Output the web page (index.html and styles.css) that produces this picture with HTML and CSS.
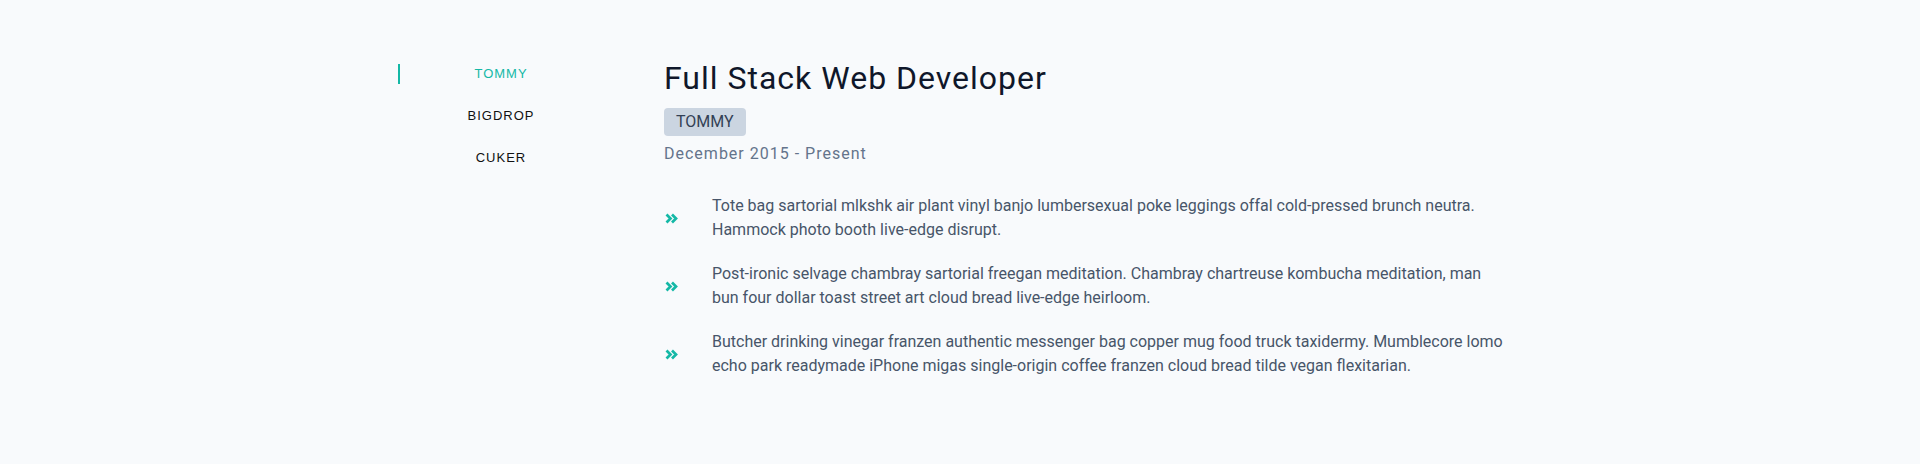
FILE: index.html
```html
<!DOCTYPE html>
<html lang="en">
<head>
<meta charset="utf-8">
<title>Experience</title>
<link rel="stylesheet" href="styles.css">
</head>
<body>
<div class="container">
  <nav class="tabs">
    <button class="tab tab-active">TOMMY</button>
    <button class="tab">BIGDROP</button>
    <button class="tab">CUKER</button>
  </nav>
  <section class="job">
    <h1 class="job-title">Full Stack Web Developer</h1>
    <span class="badge">TOMMY</span>
    <p class="dates">December 2015 - Present</p>
    <ul class="duties">
      <li class="duty">
        <span class="duty-icon"><svg width="13" height="11" viewBox="0 0 13 11"><path d="M1.5 1.5 L5.5 5.5 L1.5 9.5 M7 1.5 L11 5.5 L7 9.5" fill="none" stroke="#14b8a6" stroke-width="2.7" stroke-linecap="butt" stroke-linejoin="miter"/></svg></span>
        <p class="duty-text">Tote bag sartorial mlkshk air plant vinyl banjo lumbersexual poke leggings offal cold-pressed brunch neutra. Hammock photo booth live-edge disrupt.</p>
      </li>
      <li class="duty">
        <span class="duty-icon"><svg width="13" height="11" viewBox="0 0 13 11"><path d="M1.5 1.5 L5.5 5.5 L1.5 9.5 M7 1.5 L11 5.5 L7 9.5" fill="none" stroke="#14b8a6" stroke-width="2.7" stroke-linecap="butt" stroke-linejoin="miter"/></svg></span>
        <p class="duty-text">Post-ironic selvage chambray sartorial freegan meditation. Chambray chartreuse kombucha meditation, man bun four dollar toast street art cloud bread live-edge heirloom.</p>
      </li>
      <li class="duty">
        <span class="duty-icon"><svg width="13" height="11" viewBox="0 0 13 11"><path d="M1.5 1.5 L5.5 5.5 L1.5 9.5 M7 1.5 L11 5.5 L7 9.5" fill="none" stroke="#14b8a6" stroke-width="2.7" stroke-linecap="butt" stroke-linejoin="miter"/></svg></span>
        <p class="duty-text">Butcher drinking vinegar franzen authentic messenger bag copper mug food truck taxidermy. Mumblecore lomo echo park readymade iPhone migas single-origin coffee franzen cloud bread tilde vegan flexitarian.</p>
      </li>
    </ul>
  </section>
</div>
</body>
</html>
```

FILE: styles.css
```css
* { box-sizing: border-box; }

html, body {
  margin: 0;
  padding: 0;
  background: #f8fafc;
  min-height: 464px;
  font-family: Roboto, "Liberation Sans", Arial, sans-serif;
}

.container {
  width: 1124px;
  margin: 0 auto;
  padding-top: 60px;
  display: flex;
  align-items: flex-start;
}

.tabs {
  width: 204px;
  flex: none;
  margin-top: 4px;
  display: flex;
  flex-direction: column;
  gap: 22px;
}

.tab {
  display: block;
  width: 100%;
  height: 20px;
  padding: 0;
  margin: 0;
  border: 0;
  border-left: 2px solid transparent;
  background: transparent;
  font-family: "Liberation Sans", Arial, sans-serif;
  font-size: 13px;
  line-height: 20px;
  letter-spacing: 1px;
  color: #111111;
  text-align: center;
  cursor: pointer;
}

.tab-active {
  border-left-color: #14b8a6;
  color: #14b8a6;
}

.job {
  margin-left: 62px;
  flex: 1;
}

.job-title {
  margin: 0;
  font-size: 32px;
  line-height: 36px;
  font-weight: 400;
  letter-spacing: 1px;
  color: #0f172a;
}

.badge {
  display: inline-block;
  margin-top: 12px;
  padding: 2px 12px;
  background: #cbd5e1;
  border-radius: 4px;
  font-size: 16px;
  line-height: 24px;
  color: #334155;
}

.dates {
  margin: 6px 0 0;
  font-size: 16px;
  line-height: 24px;
  letter-spacing: 1px;
  color: #64748b;
}

.duties {
  list-style: none;
  margin: 28px 0 0;
  padding: 0;
  display: flex;
  flex-direction: column;
  gap: 20px;
}

.duty {
  display: flex;
  align-items: center;
}

.duty-icon {
  width: 48px;
  flex: none;
  display: flex;
  align-items: center;
  padding-left: 1px;
}

.duty-icon svg { display: block; }

.duty-text {
  margin: 0;
  width: 798px;
  font-size: 16px;
  line-height: 24px;
  color: #475569;
}
```
